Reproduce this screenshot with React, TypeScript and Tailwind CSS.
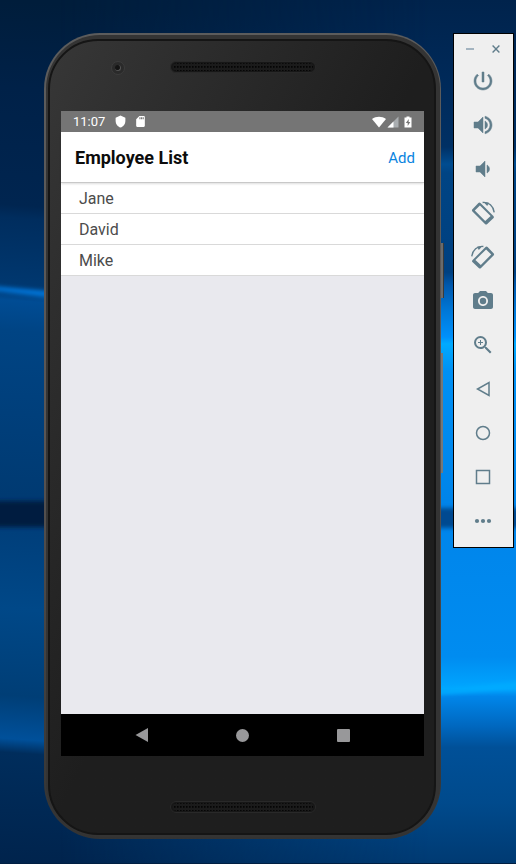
import type { ReactNode } from "react";
import { MdPhotoCamera, MdZoomIn, MdSdCard, MdShield } from "react-icons/md";

function Wallpaper() {
  return (
    <svg
      className="absolute inset-0 h-full w-full"
      viewBox="0 0 516 864"
      preserveAspectRatio="none"
      aria-hidden="true"
    >
      <defs>
        <linearGradient id="left" x1="0" y1="0" x2="-60" y2="864" gradientUnits="userSpaceOnUse">
          <stop offset="0" stopColor="#001d3b" />
          <stop offset="0.1" stopColor="#002148" />
          <stop offset="0.235" stopColor="#002550" />
          <stop offset="0.25" stopColor="#002d5e" />
          <stop offset="0.33" stopColor="#003870" />
          <stop offset="0.345" stopColor="#004c94" />
          <stop offset="0.38" stopColor="#004484" />
          <stop offset="0.57" stopColor="#003a72" />
          <stop offset="0.59" stopColor="#003d78" />
          <stop offset="0.7" stopColor="#004888" />
          <stop offset="0.8" stopColor="#003e76" />
          <stop offset="0.85" stopColor="#00509a" />
          <stop offset="0.866" stopColor="#002d5c" />
          <stop offset="1" stopColor="#00234c" />
        </linearGradient>
        <linearGradient id="right" x1="0" y1="0" x2="0" y2="864" gradientUnits="userSpaceOnUse">
          <stop offset="0" stopColor="#00234c" />
          <stop offset="0.1" stopColor="#002a5a" />
          <stop offset="0.17" stopColor="#003064" />
          <stop offset="0.19" stopColor="#004c90" />
          <stop offset="0.2" stopColor="#004484" />
          <stop offset="0.315" stopColor="#004080" />
          <stop offset="0.33" stopColor="#0058ac" />
          <stop offset="0.36" stopColor="#0078d8" />
          <stop offset="0.39" stopColor="#0090fa" />
          <stop offset="0.398" stopColor="#00aaff" />
          <stop offset="0.43" stopColor="#0090f4" />
          <stop offset="0.58" stopColor="#0084ea" />
          <stop offset="0.76" stopColor="#008cf0" />
          <stop offset="0.797" stopColor="#00a6ff" />
          <stop offset="0.806" stopColor="#0086ea" />
          <stop offset="0.84" stopColor="#0068c0" />
          <stop offset="0.865" stopColor="#005098" />
          <stop offset="0.93" stopColor="#004a8c" />
          <stop offset="1" stopColor="#003a72" />
        </linearGradient>
        <linearGradient id="blend" x1="60" y1="0" x2="430" y2="0" gradientUnits="userSpaceOnUse">
          <stop offset="0" stopColor="#000" />
          <stop offset="1" stopColor="#fff" />
        </linearGradient>
        <mask id="fade">
          <rect width="516" height="864" fill="url(#blend)" />
        </mask>
        <filter id="soft" x="-10%" y="-100%" width="120%" height="300%">
          <feGaussianBlur stdDeviation="2" />
        </filter>
      </defs>
      <rect width="516" height="864" fill="url(#left)" />
      <rect width="516" height="864" fill="url(#right)" mask="url(#fade)" />
      <path d="M-10 286 L60 292 V299 L-10 290Z" fill="#0074d8" filter="url(#soft)" />
      <path d="M-20 501 H260 V527 H-20Z" fill="#001f40" filter="url(#soft)" />
      <path d="M420 508 H540 V528 H420Z" fill="#004a90" filter="url(#soft)" />
      <path d="M420 692 L540 680 V686 L420 696Z" fill="#00acff" filter="url(#soft)" />
      <rect y="863" width="516" height="1" fill="#001f42" />
    </svg>
  );
}

function Speaker() {
  return (
    <svg className="h-3 w-[146px]" viewBox="0 0 146 12" aria-hidden="true">
      <defs>
        <pattern id="mesh" width="3" height="4" patternUnits="userSpaceOnUse">
          <rect width="3" height="4" fill="#1b1b1b" />
          <rect x="1" y="1" width="1.6" height="1.8" fill="#050505" />
        </pattern>
      </defs>
      <rect x="0.5" y="0.5" width="145" height="11" rx="5.5" fill="#171717" stroke="#292929" />
      <rect x="3" y="2" width="140" height="8" rx="4" fill="url(#mesh)" />
    </svg>
  );
}

function Solid({ d }: { d: string }) {
  return (
    <svg width="24" height="24" viewBox="0 0 24 24" fill="currentColor" stroke="currentColor" strokeWidth="0.5" aria-hidden="true">
      <path d={d} />
    </svg>
  );
}

function TiltedPhone() {
  return (
    <>
      <path
        fillRule="evenodd"
        stroke="none"
        fill="currentColor"
        d="M8.4 1.4 Q9 1.4 9.5 1.9 L22.6 15.3 Q23.3 16.2 22.6 17 L16 23.2 Q15.1 24 14.2 23.2 L1.2 10.2 Q0.6 9.4 1.2 8.6 L7.4 1.9 Q7.9 1.4 8.4 1.4Z M8.9 4.4 L3.8 9.6 L14.2 20 L19.6 14.9Z"
      />
      <path d="M11.6 1.5 C17.8 0.7 22.4 5.2 23.2 11.4" strokeWidth="1.4" />
      <path d="M12.4 1 L18 1.8 L16.2 5Z" fill="currentColor" stroke="none" />
    </>
  );
}

function RotateLeft() {
  return (
    <svg width="24" height="24" viewBox="0 0 24 24" fill="none" stroke="currentColor" aria-hidden="true">
      <TiltedPhone />
    </svg>
  );
}

function RotateRight() {
  return (
    <svg width="24" height="24" viewBox="0 0 24 24" fill="none" stroke="currentColor" aria-hidden="true">
      <g transform="matrix(-1 0 0 1 24 0)">
        <TiltedPhone />
      </g>
    </svg>
  );
}

function Outline({ children }: { children: ReactNode }) {
  return (
    <svg width="24" height="24" viewBox="0 0 24 24" fill="none" stroke="currentColor" strokeWidth="1.5" aria-hidden="true">
      {children}
    </svg>
  );
}

const tools: { label: string; icon: ReactNode }[] = [
  {
    label: "Power",
    icon: (
      <Solid d="M13 3h-2v10h2V3zm4.83 2.17-1.42 1.42C17.99 7.86 19 9.81 19 12c0 3.87-3.13 7-7 7s-7-3.13-7-7c0-2.19 1.01-4.14 2.58-5.42L6.17 5.17C4.23 6.82 3 9.26 3 12c0 4.97 4.03 9 9 9s9-4.03 9-9c0-2.74-1.23-5.18-3.17-6.83z" />
    ),
  },
  {
    label: "Volume up",
    icon: (
      <Solid d="M3 9v6h4l5 5V4L7 9H3zm13.5 3c0-1.77-1.02-3.29-2.5-4.03v8.05c1.48-.73 2.5-2.25 2.5-4.02zM14 3.23v2.06c2.89.86 5 3.54 5 6.71s-2.11 5.85-5 6.71v2.06c4.01-.91 7-4.49 7-8.77s-2.99-7.86-7-8.77z" />
    ),
  },
  {
    label: "Volume down",
    icon: (
      <Solid d="M18.5 12c0-1.77-1.02-3.29-2.5-4.03v8.05c1.48-.73 2.5-2.25 2.5-4.02zM5 9v6h4l5 5V4L9 9H5z" />
    ),
  },
  { label: "Rotate left", icon: <RotateLeft /> },
  { label: "Rotate right", icon: <RotateRight /> },
  { label: "Take screenshot", icon: <MdPhotoCamera size={24} /> },
  { label: "Zoom", icon: <MdZoomIn size={24} /> },
  { label: "Back", icon: <Outline><path d="M18 5.5 V18.5 L6.5 12Z" /></Outline> },
  { label: "Home", icon: <Outline><circle cx="12" cy="12" r="6.5" /></Outline> },
  { label: "Overview", icon: <Outline><rect x="5.5" y="5.5" width="13" height="13" /></Outline> },
  {
    label: "More",
    icon: (
      <svg width="24" height="24" viewBox="0 0 24 24" fill="currentColor" aria-hidden="true">
        <circle cx="6" cy="12" r="2.1" />
        <circle cx="12" cy="12" r="2.1" />
        <circle cx="18" cy="12" r="2.1" />
      </svg>
    ),
  },
];

function StatusBar() {
  return (
    <div className="flex h-[21px] shrink-0 items-center bg-[#757575] px-3 text-white">
      <span className="text-[13px] leading-5">11:07</span>
      <MdShield size={13} className="ml-[9px]" />
      <MdSdCard size={13} className="ml-[7px]" />
      <span className="ml-auto flex items-center">
        <svg width="14" height="12" viewBox="0 0 14 12" aria-hidden="true">
          <path d="M0 3 C4 0 10 0 14 3 L7 11.5Z" fill="#fff" />
        </svg>
        <svg width="12" height="12" viewBox="0 0 12 12" className="ml-px" aria-hidden="true">
          <path d="M11.5 0.5 V11.5 H0.5Z" fill="#a9adb0" />
          <path d="M6.5 5.5 V11.5 H0.5Z" fill="#fff" />
        </svg>
        <svg width="8" height="12" viewBox="0 0 8 12" className="ml-[5px]" aria-hidden="true">
          <path d="M0.5 1.5 H2.5 V0.5 H5.5 V1.5 H7.5 V11.5 H0.5Z" fill="#fff" />
          <path d="M4.8 3 L1.8 7 H3.7 V10 L6.3 5.9 H4.6Z" fill="#757575" />
        </svg>
      </span>
    </div>
  );
}

function Phone() {
  return (
    <div className="relative flex min-w-0 flex-1">
      <div className="absolute top-[210px] -right-[3px] h-[55px] w-1 border-r border-[#3a3a3a] bg-[#6b6b6b]" />
      <div className="absolute top-80 -right-0.5 h-[120px] w-1 border-l border-[#333] bg-[#777]" />
      <div className="relative flex min-w-0 flex-1 flex-col rounded-[56px] bg-linear-to-b from-[#5c5c5c] via-[#5a5553] to-[#333] pt-0.5 pr-px pb-0.5 pl-0.5">
        <div className="flex min-w-0 flex-1 flex-col rounded-[54px] bg-[#343434] pt-1 pr-1 pb-0.5 pl-0.5">
          <div className="flex min-w-0 flex-1 flex-col rounded-[50px] border-2 border-[#151515] bg-linear-to-br from-[#373737] via-[#1e1e1e] via-50% to-[#1e1e1e] pr-2.5 pl-[11px]">
            <div className="relative flex h-[70px] shrink-0 items-start justify-center pt-5">
              <span className="absolute top-5 left-[50px] flex size-3.5 items-center justify-center rounded-full border border-[#3c3c3c] bg-[#2a2a2a]">
                <span className="size-1.5 rounded-full border-r border-b border-[#555] bg-[#141414]" />
              </span>
              <Speaker />
            </div>
            <div className="flex min-h-0 flex-1 flex-col bg-[#e9e9ee]">
              <StatusBar />
              <header className="z-10 flex h-[51px] shrink-0 items-center justify-between border-b border-[#c8c8c8] bg-white pt-px pr-[9px] pl-3.5 shadow-[0_1px_2px_#0002]">
                <h1 className="text-lg leading-6 font-bold text-[#0c0c0c]">Employee List</h1>
                <button type="button" className="text-[15px] leading-6 text-[#0a84e0]">Add</button>
              </header>
              <ul className="bg-white">
                {["Jane", "David", "Mike"].map((name) => (
                  <li key={name} className="border-b border-[#d9d9d9] pt-1 pb-0.5 pl-[18px] text-base leading-6 text-[#4c4c4c]">
                    {name}
                  </li>
                ))}
              </ul>
              <nav className="mt-auto grid h-[42px] shrink-0 grid-cols-3 bg-black px-[30px] text-[#98989a]">
                <button type="button" aria-label="Back" className="flex items-center justify-center">
                  <svg width="14" height="14" viewBox="0 0 14 14" fill="currentColor"><path d="M13 0 V14 L0.5 7Z" /></svg>
                </button>
                <button type="button" aria-label="Home" className="flex items-center justify-center">
                  <span className="size-[13px] rounded-full bg-current" />
                </button>
                <button type="button" aria-label="Overview" className="flex items-center justify-center">
                  <span className="size-[13px] rounded-[1px] bg-current" />
                </button>
              </nav>
            </div>
            <div className="flex h-[77px] shrink-0 items-center justify-center pt-6">
              <Speaker />
            </div>
          </div>
        </div>
      </div>
    </div>
  );
}

export default function App() {
  return (
    <main className="relative flex min-h-screen items-stretch gap-3 overflow-hidden bg-[#00234c] pt-[33px] pr-0.5 pb-[25px] pl-11 font-['Roboto',sans-serif]">
      <Wallpaper />
      <Phone />
      <aside className="relative w-[61px] shrink-0 self-start border border-black bg-[#efefef] pr-px pb-1 text-[#607d8b]">
        <div className="flex h-[25px] items-center justify-center gap-3.5 pt-1">
          <button type="button" aria-label="Minimize" className="flex size-3 items-center justify-center">
            <span className="h-0.5 w-2 bg-[#a3b3bf]" />
          </button>
          <button type="button" aria-label="Close" className="flex size-3 items-center justify-center">
            <svg width="8" height="8" viewBox="0 0 8 8" stroke="currentColor" strokeWidth="1.4"><path d="M0.6 0.6 L7.4 7.4 M7.4 0.6 L0.6 7.4" /></svg>
          </button>
        </div>
        {tools.map((tool) => (
          <button key={tool.label} type="button" aria-label={tool.label} className="flex h-11 w-full items-center justify-center">
            {tool.icon}
          </button>
        ))}
      </aside>
    </main>
  );
}
